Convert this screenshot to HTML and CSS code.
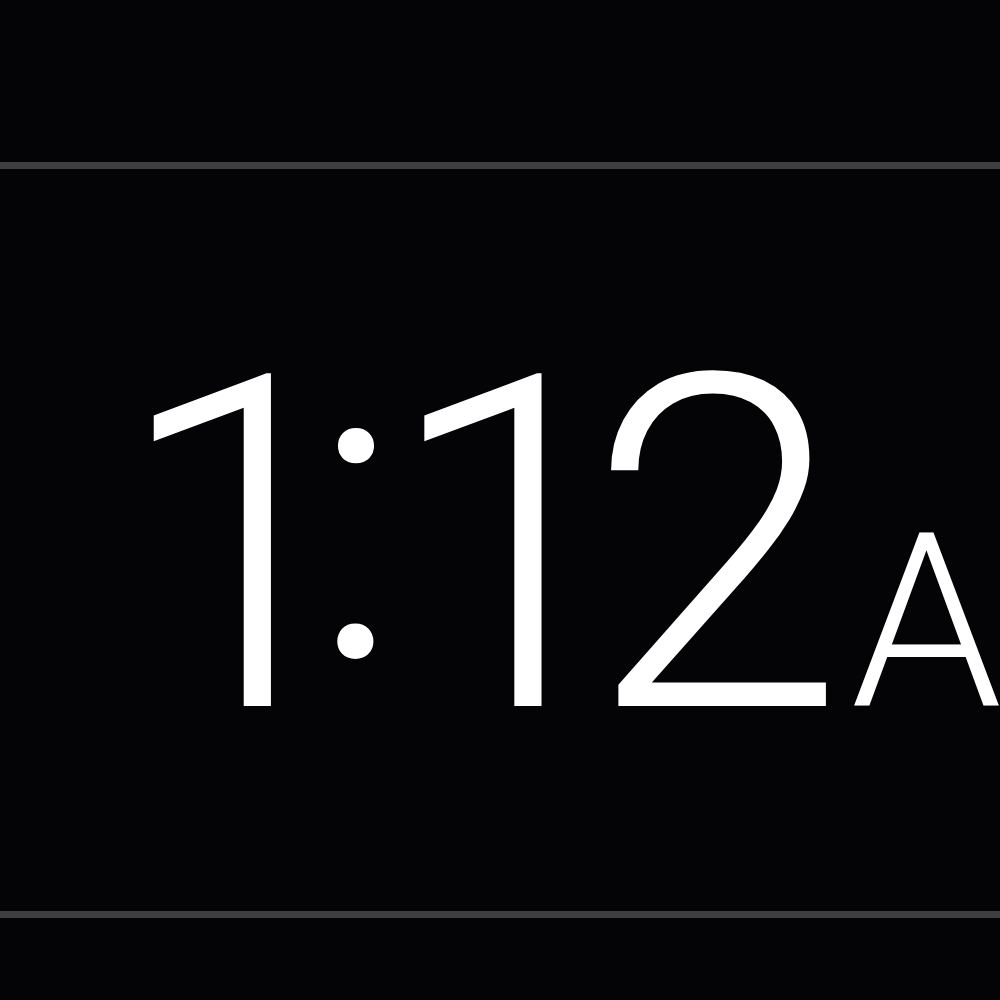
FILE: index.html
```html
<!DOCTYPE html>
<html>
<head>
<meta charset="utf-8">
<link rel="stylesheet" href="styles.css">
</head>
<body>
<div class="screen">
  <div class="top"></div>
  <div class="rule"></div>
  <div class="clock">
    <span class="time"><span class="g g-h">1</span><span class="g g-colon">:</span><span class="g g-m1">1</span><span class="g g-m2">2</span></span><span class="ampm">AM</span>
  </div>
  <div class="rule"></div>
  <div class="bottom"></div>
</div>
</body>
</html>
```

FILE: styles.css
```css
html, body {
  margin: 0;
  padding: 0;
  background: #040406;
  overflow: hidden;
}
.screen {
  width: 1000px;
  height: 1000px;
  display: flex;
  flex-direction: column;
  background: #040406;
}
.top {
  height: 162px;
}
.rule {
  height: 7px;
  background: #3f3f42;
}
.clock {
  height: 742px;
  display: flex;
  align-items: baseline;
  padding-left: 113px;
  white-space: nowrap;
  overflow: hidden;
  font-family: Roboto, "Liberation Sans", sans-serif;
  font-weight: 300;
  color: #ffffff;
  line-height: 1;
}
.time {
  font-size: 466px;
  margin-top: 145px;
}
.g {
  display: inline-block;
}
.g-h {
  margin-right: -63px;
}
.g-colon {
  font-size: 434px;
  margin-left: 2px;
  margin-right: -18px;
  transform: translateY(-49px);
}
.g-m1 {
  margin-right: -55px;
}
.ampm {
  font-size: 243px;
  margin-left: 5px;
}
.bottom {
  flex: 1;
}
```
